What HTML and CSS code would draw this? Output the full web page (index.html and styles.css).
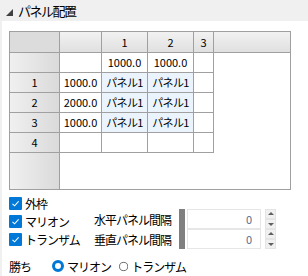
FILE: index.html
```html
<html>
<head>
<meta charset="utf-8">
<link rel="stylesheet" href="styles.css">
</head>
<body>
<div class="panel">
<div class="head">
<svg class="tri" width="7" height="7" viewBox="0 0 7 7"><polygon points="7,0 7,7 0,7" fill="#404040"/></svg>
<span class="title">パネル配置</span>
</div>
<div class="content">
<div class="grid">
<div class="cell corner"></div><div class="cell ch"></div><div class="cell ch">1</div><div class="cell ch">2</div><div class="cell ch">3</div><div class="cell ch last"></div>
<div class="cell rh"></div><div class="cell"></div><div class="cell">1000.0</div><div class="cell">1000.0</div><div class="cell"></div><div class="blank"></div>
<div class="cell rh">1</div><div class="cell">1000.0</div><div class="cell blue">パネル1</div><div class="cell blue">パネル1</div><div class="cell"></div><div class="blank"></div>
<div class="cell rh">2</div><div class="cell">2000.0</div><div class="cell blue">パネル1</div><div class="cell blue">パネル1</div><div class="cell"></div><div class="blank"></div>
<div class="cell rh">3</div><div class="cell">1000.0</div><div class="cell blue">パネル1</div><div class="cell blue">パネル1</div><div class="cell"></div><div class="blank"></div>
<div class="cell rh">4</div><div class="cell"></div><div class="cell"></div><div class="cell"></div><div class="cell"></div><div class="blank"></div>
<div class="cell rh end"></div><div class="blank"></div><div class="blank"></div><div class="blank"></div><div class="blank"></div><div class="blank"></div>
</div>

<div class="opts">
<div class="checks">
<label class="check"><svg class="box" width="13" height="13" viewBox="0 0 13 13"><rect width="13" height="13" rx="1" fill="#0078d7"/><path d="M3.5 6.8 L5.6 8.8 L9.6 4.4" stroke="#fff" stroke-width="1.1" fill="none"/></svg>外枠</label>
<label class="check"><svg class="box" width="13" height="13" viewBox="0 0 13 13"><rect width="13" height="13" rx="1" fill="#0078d7"/><path d="M3.5 6.8 L5.6 8.8 L9.6 4.4" stroke="#fff" stroke-width="1.1" fill="none"/></svg>マリオン</label>
<label class="check"><svg class="box" width="13" height="13" viewBox="0 0 13 13"><rect width="13" height="13" rx="1" fill="#0078d7"/><path d="M3.5 6.8 L5.6 8.8 L9.6 4.4" stroke="#fff" stroke-width="1.1" fill="none"/></svg>トランザム</label>
</div>
<div class="spins">
<div class="spin">
<span class="lbl">水平パネル間隔</span>
<span class="bar"></span>
<span class="num">0</span>
<span class="arrows"><span class="up"></span><span class="down"></span></span>
</div>
<div class="spin">
<span class="lbl">垂直パネル間隔</span>
<span class="bar"></span>
<span class="num">0</span>
<span class="arrows"><span class="up"></span><span class="down"></span></span>
</div>
</div>
</div>

<div class="win">
<span class="winlbl">勝ち</span>
<label class="radio"><svg width="12" height="12" viewBox="0 0 12 12"><circle cx="6" cy="6" r="4.5" fill="#fff" stroke="#0078d7" stroke-width="3"/></svg>マリオン</label>
<label class="radio"><svg width="13" height="13" viewBox="0 0 13 13"><circle cx="6.5" cy="6.5" r="5.8" fill="#fff" stroke="#333" stroke-width="1"/></svg>トランザム</label>
</div>
</div>
</div>
</body>
</html>
```

FILE: styles.css
```css
body
{
	margin: 0;
	background-color: #ffffff;
	font-family: "Noto Sans CJK JP", "Liberation Sans", sans-serif;
	font-size: 11px;
	color: #000000;
}
.panel
{
	width: 308px;
	height: 276px;
	overflow: hidden;
}
.head
{
	height: 21px;
	background-color: #f0f0f0;
	display: flex;
	align-items: center;
}
.tri
{
	margin-left: 6px;
	margin-top: 3px;
}
.title
{
	margin-left: 5px;
	font-size: 13px;
	letter-spacing: -1.5px;
	line-height: 21px;
}
.content
{
	border-left: 2px solid #f0f0f0;
	padding: 10px 0 0 7px;
	height: 245px;
}
.grid
{
	display: grid;
	grid-template-columns: 50px 42px 46px 46px 20px 76px;
	grid-template-rows: 21px repeat(5, 20px) 36px;
	width: 282px;
	box-sizing: border-box;
	border: 1px solid #a0a0a0;
}
.cell
{
	box-sizing: border-box;
	border-right: 1px solid #a0a0a0;
	border-bottom: 1px solid #a0a0a0;
	text-align: center;
	line-height: 19px;
	white-space: nowrap;
	overflow: hidden;
}
.corner
{
	background-color: #dcdcdc;
}
.ch
{
	background: linear-gradient(#f2f2f2, #e0e0e0);
	line-height: 20px;
}
.ch.last
{
	border-right: none;
}
.rh
{
	background: linear-gradient(to right, #f0f0f0, #dadada);
}
.rh.end
{
	border-bottom: none;
}
.blue
{
	background-color: #ebf4fd;
	letter-spacing: -0.6px;
}
.opts
{
	display: flex;
	margin-top: 4px;
	font-size: 12px;
	letter-spacing: -1px;
}
.checks
{
	width: 85px;
	display: flex;
	flex-direction: column;
}
.check
{
	height: 18px;
	display: flex;
	align-items: center;
	white-space: nowrap;
}
.box
{
	margin-right: 3px;
}
.spins
{
	margin-top: 15px;
	display: flex;
	flex-direction: column;
}
.spin
{
	height: 20px;
	display: flex;
	align-items: center;
}
.lbl
{
	width: 85px;
	white-space: nowrap;
}
.bar
{
	width: 6px;
	height: 20px;
	background-color: #808080;
	margin-right: 2px;
}
.num
{
	width: 74px;
	height: 20px;
	box-sizing: border-box;
	border: 1px solid #e6e6e6;
	text-align: right;
	padding-right: 8px;
	line-height: 18px;
	font-size: 11px;
	letter-spacing: 0;
	color: #5a6a8c;
}
.arrows
{
	margin-left: 4px;
	display: flex;
	flex-direction: column;
}
.up, .down
{
	width: 11px;
	height: 10px;
	box-sizing: border-box;
	background-color: #f0f0f0;
	border: 1px solid #e4e4e4;
	position: relative;
}
.up::after, .down::after
{
	content: "";
	position: absolute;
	left: 2px;
	border-left: 3px solid transparent;
	border-right: 3px solid transparent;
}
.up::after
{
	top: 2px;
	border-bottom: 3px solid #606060;
}
.down::after
{
	top: 3px;
	border-top: 3px solid #606060;
}
.win
{
	margin-top: 8px;
	height: 18px;
	display: flex;
	align-items: center;
	font-size: 12px;
	letter-spacing: -1px;
}
.winlbl
{
	width: 43px;
}
.radio
{
	display: flex;
	align-items: center;
	width: 67px;
	white-space: nowrap;
}
.radio svg
{
	margin-right: 3px;
}
```
